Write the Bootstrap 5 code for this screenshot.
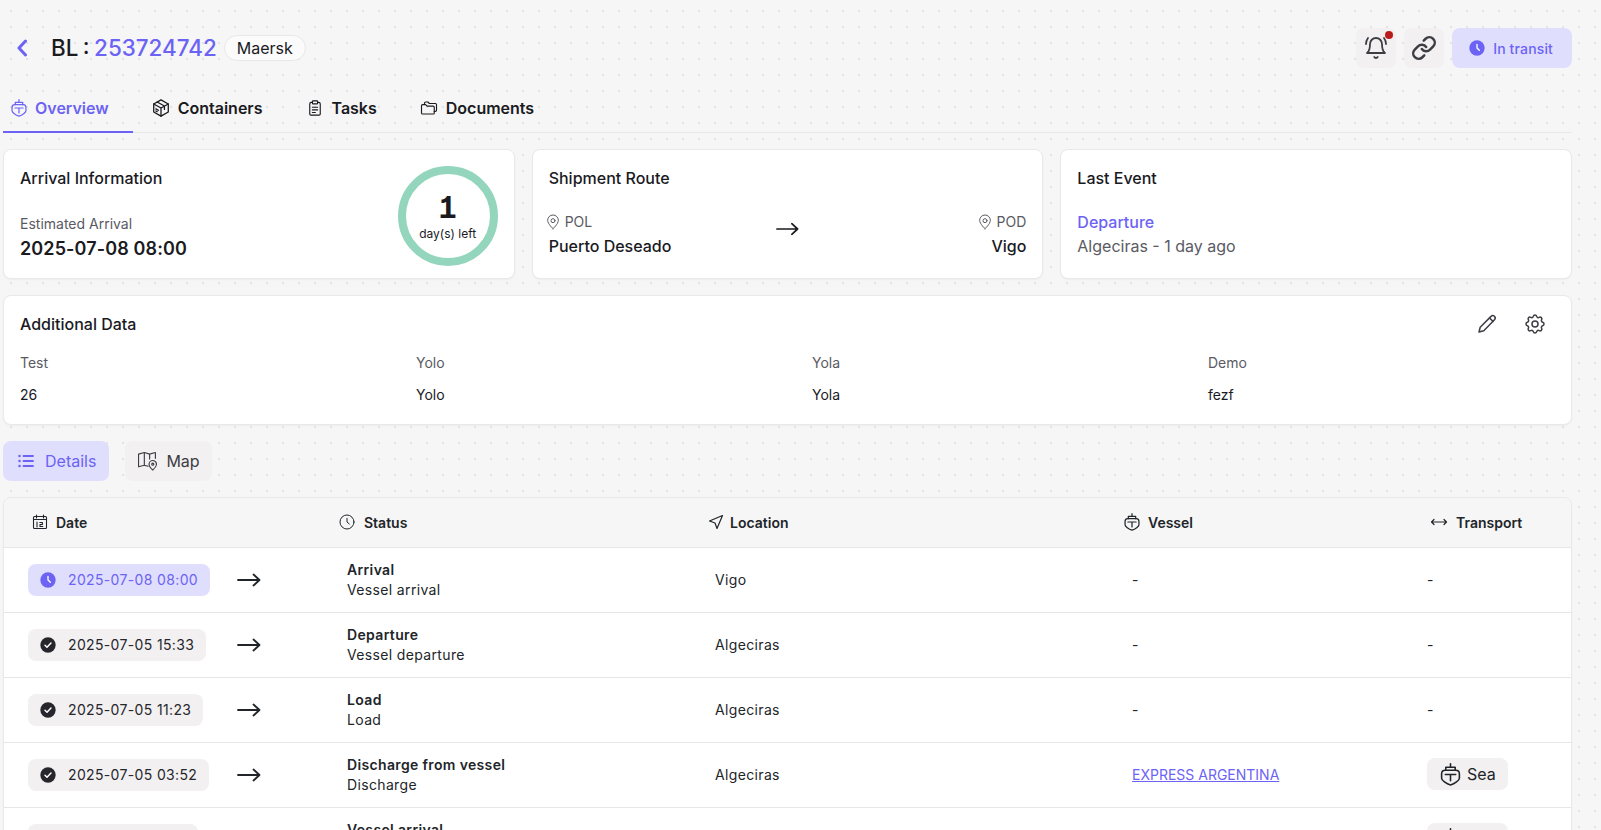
<!DOCTYPE html>
<html lang="en">
<head>
<meta charset="utf-8">
<title>BL 253724742</title>
<link href="https://cdn.jsdelivr.net/npm/bootstrap@5.3.0/dist/css/bootstrap.min.css" rel="stylesheet">
<style>
html,body{height:100%;overflow:hidden}
body{font-family:Inter,"Liberation Sans",sans-serif;color:#1a1a1f;font-size:14px;background-color:#f6f6f6;background-image:radial-gradient(circle,#e2e2e2 .8px,transparent 1.1px);background-size:16px 16px;background-position:3px 3px}
.shell{padding:28px 29px 0 3px}
svg.ic{fill:none;stroke:currentColor;stroke-width:1.5;stroke-linecap:round;stroke-linejoin:round;flex:none}
.purple{color:#6c63f5}
.bl-title{font-size:22.400px;font-weight:500;line-height:40px;margin:0;word-spacing:-1.500px}
.back{color:#6c63f5;margin-left:13px;margin-right:23px}
.carrier{font-size:16px;padding:0 12px;height:26px;display:flex;align-items:center;border:1px solid #e8e8e8;border-radius:13px;background:#fbfbfb;margin-left:7px}
.sq{width:40px;height:40px;border-radius:8px;background:#f2f0f0;color:#3d3d44;display:flex;align-items:center;justify-content:center;position:relative}
.dot{position:absolute;width:8px;height:8px;border-radius:50%;background:#b91c1c;top:3px;right:3px}
.state{height:40px;border-radius:8px;background:#dfdefd;color:#6c63f5;font-weight:500;display:flex;align-items:center;gap:8px;padding:0 19px 0 17px;font-size:14px;letter-spacing:.15px}
.tabbar{border-bottom:1px solid #ece7e7;margin-top:24px;gap:19px;height:41px}
.tabbar a{display:flex;align-items:center;gap:8px;font-size:16px;font-weight:600;color:#1a1a1f;text-decoration:none;height:41px;padding:0 0 9px 0}
.tabbar a.on{color:#6c63f5;border-bottom:2px solid #6c63f5;padding:0 24px 7px 8px;margin-bottom:-1px}
.tricol{display:grid;grid-template-columns:repeat(3,1fr);gap:17px;margin-top:16px}
.panel{background:#fff;border:1px solid #e9e9e9;border-radius:8px;box-shadow:0 1px 2px rgba(0,0,0,.04)}
.tricol .panel{height:130px;padding:16px;position:relative}
.ptitle{font-size:16px;font-weight:500;line-height:24px;margin:0}
.muted{color:#5a5a63}
.est{font-size:14px;line-height:20px;margin-top:24px}
.estv{font-size:18px;font-weight:600;line-height:26px;letter-spacing:.12px;margin-top:2px}
.ring{position:absolute;width:100px;height:100px;right:16px;top:16px}
.ringtxt{position:absolute;inset:0;display:flex;flex-direction:column;align-items:center;justify-content:center}
.ringn{font-size:30px;font-weight:700;line-height:34px;font-feature-settings:"cv01","tnum"}
.ringl{font-size:12px;line-height:16px;margin-top:2px}
.routemeta{font-size:14px;line-height:20px;gap:4px}
.routemeta svg{margin-left:-4px}
.routename{font-size:16px;font-weight:500;line-height:26px;margin-top:1px}
.route-grid{margin-top:22px;display:grid;grid-template-columns:1fr auto 1fr;align-items:start}
.route-arrow{margin-top:10px}
.ev{font-size:16px;font-weight:500;line-height:24px;margin-top:20px}
.evsub{font-size:16px;line-height:24px}
.addl{margin-top:16px;height:130px;padding:16px}
.addgrid{display:grid;grid-template-columns:repeat(3,396px) 1fr;row-gap:12px;margin-top:17px;line-height:20px;font-size:14px}
.viewbtns{margin-top:16px;gap:16px}
.vbtn{height:40px;border-radius:8px;display:flex;align-items:center;gap:10px;font-size:16px;padding:0 13px 0 14px;background:#f2f0f0;color:#3d3d44}
.vbtn.on{background:#dfdefd;color:#6c63f5}
.vbtn.alt{gap:9px;padding:0 12px 0 13px}
.tablewrap{margin-top:16px;overflow:hidden}
.shipt{margin:0;table-layout:fixed;width:100%;--bs-table-bg:transparent}
.shipt th{background:#f6f6f6;height:49px;font-size:14px;font-weight:600;vertical-align:middle;padding:0;border-bottom:1px solid #e6e6e6}
.shipt td{height:65px;vertical-align:middle;padding:0;font-size:14px;letter-spacing:.35px;border-bottom:1px solid #e6e6e6;background:#fff}
.thc{display:flex;align-items:center;gap:8px}
.thc.tight{gap:6px}
.shipt th:nth-child(1){padding-left:28px;width:317px}
.shipt th:nth-child(2){padding-left:18px;width:369px}
.shipt th:nth-child(3){padding-left:18px;width:415px}
.shipt th:nth-child(4){padding-left:19px;width:306px}
.shipt th:nth-child(5){padding-left:19px}
.shipt th:nth-child(2) .thc{gap:9px}
.shipt td:nth-child(1){padding-left:24px}
.shipt td:nth-child(2){padding-left:26px;line-height:20px}
.shipt td:nth-child(3){padding-left:25px}
.shipt td:nth-child(4){padding-left:27px}
.shipt td:nth-child(5){padding-left:16px}
.datecell{display:flex;align-items:center;justify-content:flex-start}
.pilld{height:32px;border-radius:8px;background:#f2f0f0;display:flex;align-items:center;gap:12px;padding:0 12px;color:#26262c}
.pilld.cur{background:#dfdefd;color:#6c63f5}
.arrowslot{position:absolute;left:233px}
.stt{font-weight:600}
.vlink{color:#6c63f5;text-decoration:underline;letter-spacing:0}
.seachip{display:inline-flex;align-items:center;gap:6px;height:32px;border-radius:8px;background:#f2f0f0;padding:0 12.500px 0 13px;font-size:16px;letter-spacing:0}
.rowrel{position:relative}
</style>
</head>
<body>
<svg width="0" height="0" class="position-absolute">
<defs>
<symbol id="ship" viewBox="2.500 1 19 22"><path d="M12 1.800V5M7.500 8V5h9v3"/><path d="M3.500 11.500C3.500 9.500 5 8 7 8h10c2 0 3.500 1.500 3.500 3.500v4c0 2-4.500 5.500-8.500 6.500-4-1-8.500-4.500-8.500-6.500z"/><path d="M7 12h10M12 12v6"/></symbol>
<symbol id="cube" viewBox="2.500 1.500 19 21"><path d="M12 2.500l8.500 4.800v9.400L12 21.500l-8.500-4.800V7.300z"/><path d="M3.500 7.300L12 12l8.500-4.700M12 12v9.500M7.500 5l8.500 4.700v4"/><path d="M6 13l3 1.700M6 15.500l1.500.8"/></symbol>
<symbol id="clip" viewBox="0 0 24 24"><path d="M8.500 4.500H7a2 2 0 0 0-2 2V20a1.500 1.500 0 0 0 1.500 1.500h11A1.500 1.500 0 0 0 19 20V6.500a2 2 0 0 0-2-2h-1.500"/><rect x="8.500" y="2.500" width="7" height="4" rx="1"/><path d="M8.500 11h7M8.500 14.500h7M8.500 18h4"/></symbol>
<symbol id="folder" viewBox="0 0 24 24"><path d="M6 7V5.500A1.500 1.500 0 0 1 7.500 4h3l2 2h8A1.500 1.500 0 0 1 22 7.500V15a1.500 1.500 0 0 1-1.500 1.500H19"/><path d="M2 9a1.500 1.500 0 0 1 1.500-1.500h4l2 2h8A1.500 1.500 0 0 1 19 11v8a1 1 0 0 1-1 1H3.500A1.500 1.500 0 0 1 2 18.500z"/></symbol>
<symbol id="clockf" viewBox="0 0 24 24"><circle cx="12" cy="12" r="11.500" fill="currentColor" stroke="none"/><path d="M12 6.500V12l3.500 3.500" stroke="#fff" stroke-width="2"/></symbol>
<symbol id="checkf" viewBox="0 0 24 24"><circle cx="12" cy="12" r="11.500" fill="currentColor" stroke="none"/><path d="M7.500 12.500l3 3 6-6.500" stroke="#fff" stroke-width="2.200"/></symbol>
<symbol id="clock" viewBox="0 0 24 24"><circle cx="12" cy="12" r="10.500"/><path d="M12 6.500V12l3.500 3"/></symbol>
<symbol id="pin" viewBox="0 0 24 24"><path d="M12 22s-8-7-8-12.500a8 8 0 0 1 16 0C20 15 12 22 12 22z"/><circle cx="12" cy="10" r="3"/></symbol>
<symbol id="arrow" viewBox="0 0 24 14"><path d="M1 7h21M16.500 1.500L22.500 7l-6 5.500"/></symbol>
</defs>
</svg>
<div class="shell">
  <header class="d-flex align-items-center justify-content-between">
    <div class="d-flex align-items-center">
      <svg class="ic back" width="12" height="18" viewBox="0 0 12 18" style="stroke-width:3"><path d="M9.500 2L3 9l6.500 7"/></svg>
      <h1 class="bl-title">BL : <span class="purple">253724742</span></h1>
      <span class="carrier">Maersk</span>
    </div>
    <div class="d-flex gap-2">
      <div class="sq"><svg class="ic" width="24" height="24" viewBox="0 0 24 24" style="stroke-width:1.800"><path d="M6 8a6 6 0 0 1 12 0c0 7 3 9 3 9H3s3-2 3-9"/><path d="M10.300 21a1.940 1.940 0 0 0 3.400 0"/><path d="M4 2C2.800 3.700 2 5.700 2 8"/><path d="M22 8c0-2.300-.8-4.300-2-6"/></svg><span class="dot"></span></div>
      <div class="sq"><svg class="ic" width="26" height="26" viewBox="0 0 24 24" style="stroke-width:2.300"><path d="M10 13a5 5 0 0 0 7.540.54l3-3a5 5 0 0 0-7.070-7.070l-1.720 1.710"/><path d="M14 11a5 5 0 0 0-7.540-.54l-3 3a5 5 0 0 0 7.070 7.070l1.710-1.710"/></svg></div>
      <div class="state"><svg class="ic" width="16" height="16"><use href="#clockf"/></svg>In transit</div>
    </div>
  </header>

  <nav class="tabbar d-flex">
    <a class="on" href="#"><svg class="ic" width="16" height="18"><use href="#ship"/></svg>Overview</a>
    <a href="#"><svg class="ic" width="18" height="18"><use href="#cube"/></svg>Containers</a>
    <a class="ms-4" href="#"><svg class="ic" width="18" height="18"><use href="#clip"/></svg>Tasks</a>
    <a class="ms-4" href="#"><svg class="ic" width="18" height="18"><use href="#folder"/></svg>Documents</a>
  </nav>

  <section class="tricol">
    <div class="panel">
      <p class="ptitle">Arrival Information</p>
      <div class="est muted">Estimated Arrival</div>
      <div class="estv">2025-07-08 08:00</div>
      <div class="ring">
        <svg width="100" height="100" viewBox="0 0 100 100"><circle cx="50" cy="50" r="46" fill="none" stroke="#93d6bd" stroke-width="8"/></svg>
        <div class="ringtxt"><div class="ringn">1</div><div class="ringl">day(s) left</div></div>
      </div>
    </div>
    <div class="panel">
      <p class="ptitle">Shipment Route</p>
      <div class="route-grid">
        <div>
          <div class="d-flex align-items-center routemeta muted"><svg class="ic" width="16" height="16"><use href="#pin"/></svg><span>POL</span></div>
          <div class="routename">Puerto Deseado</div>
        </div>
        <svg class="ic route-arrow" width="23" height="14" viewBox="0 0 24 14" style="stroke-width:1.800"><use href="#arrow"/></svg>
        <div class="text-end">
          <div class="d-flex align-items-center justify-content-end routemeta muted"><svg class="ic" width="16" height="16"><use href="#pin"/></svg><span>POD</span></div>
          <div class="routename">Vigo</div>
        </div>
      </div>
    </div>
    <div class="panel">
      <p class="ptitle">Last Event</p>
      <div class="ev purple">Departure</div>
      <div class="evsub muted">Algeciras - 1 day ago</div>
    </div>
  </section>

  <section class="panel addl">
    <div class="d-flex justify-content-between align-items-center">
      <p class="ptitle">Additional Data</p>
      <div class="d-flex align-items-center gap-4 pe-2" style="color:#3d3d44">
        <svg class="ic" width="24" height="24" viewBox="0 0 24 24"><path d="M4 20l1.200-4.800L16 4.400a2.300 2.300 0 0 1 3.500 3.300L8.800 18.700z"/><path d="M14.500 6l3.500 3.400"/></svg>
        <svg class="ic" width="24" height="24" viewBox="0 0 24 24"><path d="M10.325 4.317c.426-1.756 2.924-1.756 3.350 0a1.724 1.724 0 0 0 2.573 1.066c1.543-.94 3.310.826 2.370 2.370a1.724 1.724 0 0 0 1.065 2.572c1.756.426 1.756 2.924 0 3.350a1.724 1.724 0 0 0-1.066 2.573c.94 1.543-.826 3.310-2.370 2.370a1.724 1.724 0 0 0-2.572 1.065c-.426 1.756-2.924 1.756-3.350 0a1.724 1.724 0 0 0-2.573-1.066c-1.543.94-3.310-.826-2.370-2.370a1.724 1.724 0 0 0-1.065-2.572c-1.756-.426-1.756-2.924 0-3.350a1.724 1.724 0 0 0 1.066-2.573c-.94-1.543.826-3.310 2.370-2.370 1 .608 2.296.07 2.572-1.065z"/><circle cx="12" cy="12" r="3"/></svg>
      </div>
    </div>
    <div class="addgrid">
      <div class="muted">Test</div><div class="muted">Yolo</div><div class="muted">Yola</div><div class="muted">Demo</div>
      <div>26</div><div>Yolo</div><div>Yola</div><div>fezf</div>
    </div>
  </section>

  <div class="d-flex viewbtns">
    <div class="vbtn on"><svg class="ic" width="18" height="18" viewBox="0 0 18 18" style="stroke-width:1.800"><path d="M6.500 4H16M6.500 9H16M6.500 14H16"/><path d="M2.500 4h.01M2.500 9h.01M2.500 14h.01" stroke-width="2.500"/></svg>Details</div>
    <div class="vbtn alt"><svg class="ic" width="19" height="20" viewBox="1 2 18 18" style="stroke-width:1.100"><path d="M7 3L1.500 4.500v12L7 15l3.500 1M7 3l5 1.500L17.500 3v5.500M7 3v12M12 4.500V9"/><path d="M15 19.500s-3.500-3-3.500-5.500a3.500 3.500 0 0 1 7 0c0 2.500-3.500 5.500-3.500 5.500z"/><circle cx="15" cy="14" r="1"/></svg>Map</div>
  </div>

  <section class="panel tablewrap">
    <table class="table shipt">
      <thead>
        <tr>
          <th><div class="thc"><svg class="ic" width="16" height="16" viewBox="0 0 16 16" style="stroke-width:1.100"><rect x="1.500" y="2.500" width="13" height="12" rx="1"/><path d="M1.500 5.500h13M4.500 1v3M11.500 1v3M5 8v5M7.800 8.500h2.600v2H8v2h2.800"/></svg>Date</div></th>
          <th><div class="thc"><svg class="ic" width="16" height="16"><use href="#clock"/></svg>Status</div></th>
          <th><div class="thc tight"><svg class="ic" width="16" height="16" viewBox="0 0 16 16" style="stroke-width:1.200"><path d="M14.500 1.500L1.500 7l5.500 2 2 5.500z"/></svg>Location</div></th>
          <th><div class="thc"><svg class="ic" width="16" height="18"><use href="#ship"/></svg>Vessel</div></th>
          <th><div class="thc"><svg class="ic" width="18" height="16" viewBox="0 0 18 16" style="stroke-width:1.200"><path d="M1.500 8h15M4 5.500L1.500 8 4 10.500M14 5.500L16.500 8 14 10.500"/></svg>Transport</div></th>
        </tr>
      </thead>
      <tbody>
        <tr>
          <td class="rowrel"><div class="datecell"><span class="pilld cur"><svg class="ic" width="16" height="16"><use href="#clockf"/></svg>2025-07-08 08:00</span><svg class="ic arrowslot" width="24" height="14" style="stroke-width:1.800"><use href="#arrow"/></svg></div></td>
          <td><div class="stt">Arrival</div><div>Vessel arrival</div></td>
          <td>Vigo</td><td>-</td><td>-</td>
        </tr>
        <tr>
          <td class="rowrel"><div class="datecell"><span class="pilld"><svg class="ic" width="16" height="16"><use href="#checkf"/></svg>2025-07-05 15:33</span><svg class="ic arrowslot" width="24" height="14" style="stroke-width:1.800"><use href="#arrow"/></svg></div></td>
          <td><div class="stt">Departure</div><div>Vessel departure</div></td>
          <td>Algeciras</td><td>-</td><td>-</td>
        </tr>
        <tr>
          <td class="rowrel"><div class="datecell"><span class="pilld"><svg class="ic" width="16" height="16"><use href="#checkf"/></svg>2025-07-05 11:23</span><svg class="ic arrowslot" width="24" height="14" style="stroke-width:1.800"><use href="#arrow"/></svg></div></td>
          <td><div class="stt">Load</div><div>Load</div></td>
          <td>Algeciras</td><td>-</td><td>-</td>
        </tr>
        <tr>
          <td class="rowrel"><div class="datecell"><span class="pilld"><svg class="ic" width="16" height="16"><use href="#checkf"/></svg>2025-07-05 03:52</span><svg class="ic arrowslot" width="24" height="14" style="stroke-width:1.800"><use href="#arrow"/></svg></div></td>
          <td><div class="stt">Discharge from vessel</div><div>Discharge</div></td>
          <td>Algeciras</td><td><a class="vlink" href="#">EXPRESS ARGENTINA</a></td><td><span class="seachip"><svg class="ic" width="21" height="23"><use href="#ship"/></svg>Sea</span></td>
        </tr>
        <tr>
          <td class="rowrel"><div class="datecell"><span class="pilld"><svg class="ic" width="16" height="16"><use href="#checkf"/></svg>2025-07-04 11:11</span><svg class="ic arrowslot" width="24" height="14" style="stroke-width:1.800"><use href="#arrow"/></svg></div></td>
          <td><div class="stt">Vessel arrival</div><div>Vessel arrival</div></td>
          <td>Algeciras</td><td><a class="vlink" href="#">EXPRESS ARGENTINA</a></td><td><span class="seachip"><svg class="ic" width="21" height="23"><use href="#ship"/></svg>Sea</span></td>
        </tr>
      </tbody>
    </table>
  </section>
</div>
</body>
</html>
